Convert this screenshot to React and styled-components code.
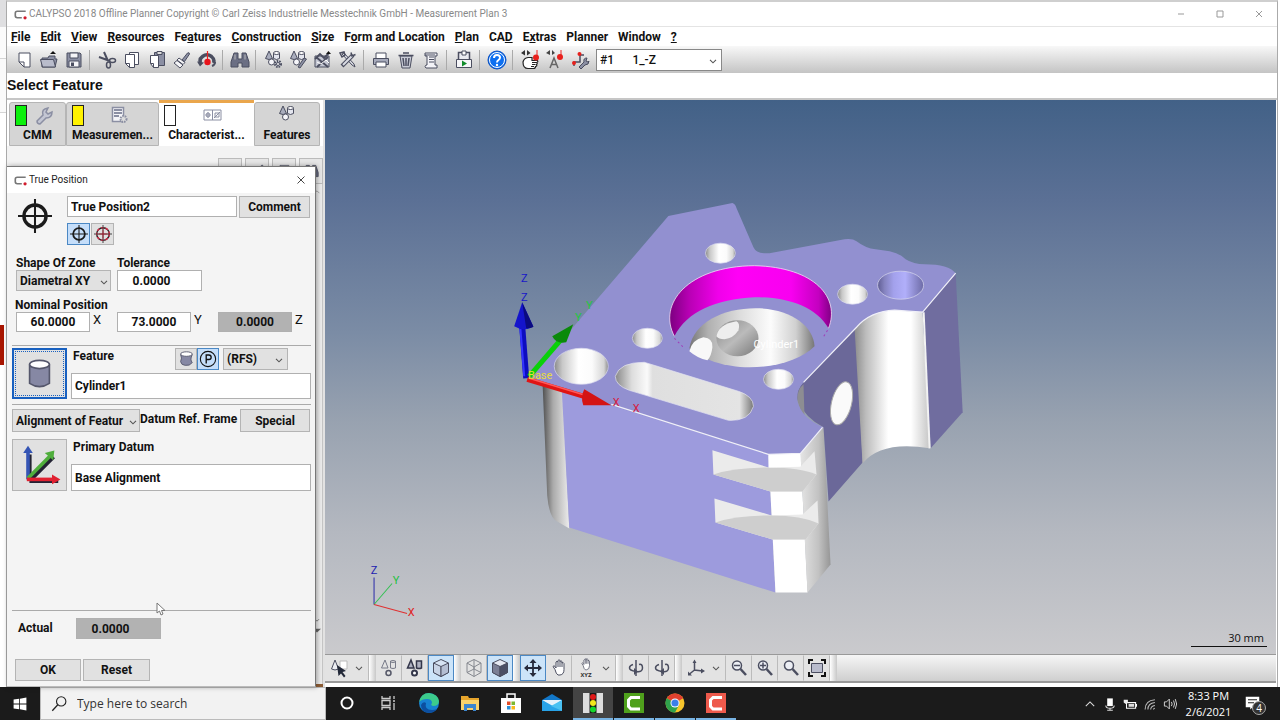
import React from "react";
import styled, { createGlobalStyle, css } from "styled-components";

const uiFont = `Roboto, "Liberation Sans", sans-serif`;
const winFont = `"Open Sans", "Noto Sans", sans-serif`;

const GlobalStyle = createGlobalStyle`
  * { box-sizing: border-box; }
  body { margin: 0; background: #fff; color: #111; font: 700 12px/16px ${uiFont}; }
  button, input, select { font: inherit; color: inherit; margin: 0; }
  svg { display: block; flex: none; }
`;

/* ---------- icon drawings ---------- */

const ink = "#4b4e60";
const soft = "#8b8fa3";

const Solids = () => (
  <>
    <path d="M6 1 L9.500 8.500 Q6 10.500 2.500 8.500Z" fill="#a9adbd" stroke={ink} />
    <path d="M10.500 3v5.500q3 2 6 0V3" fill="#e3e5ee" stroke={ink} />
    <ellipse cx="13.500" cy="3" rx="3" ry="1.500" fill="#fff" stroke={ink} />
    <circle cx="8.500" cy="12" r="3" fill="#f6f6fa" stroke={ink} />
  </>
);

const Cube = ({ faces }) => (
  <>
    <path d="M10 1.500 17.500 5v9.500L10 18.500 2.500 14.500V5Z" fill={faces[0]} stroke={ink} strokeLinejoin="round" />
    <path d="M2.500 5 10 8.500v10L2.500 14.500Z" fill={faces[1]} stroke={ink} strokeLinejoin="round" />
    <path d="M10 8.500 17.500 5v9.500L10 18.500Z" fill={faces[2]} stroke={ink} strokeLinejoin="round" />
  </>
);

const Hand = () => (
  <path
    d="M6 11.500 4 8.500q1-1.500 2 0l1 1.500V4q1-1.500 2 0V2.500q1-1.500 2 0V3.500q1-1.500 2 0V5q1.500-1 2 .500v6q0 5-4 5.500H9q-2-1-3-5.500ZM9 4v5M11 3v6M13 4v5"
    fill="#fff"
    stroke={ink}
  />
);

const Lens = () => (
  <>
    <circle cx="8" cy="7.500" r="4.500" fill="#eceef4" stroke={ink} strokeWidth="1.500" />
    <path d="m11.500 11 5.500 6" stroke={ink} strokeWidth="2.500" />
  </>
);

const glyphs = {
  page: <path d="M5 3h11v14H10l-5-5ZM5 12h5v5" fill="#fff" stroke={ink} />,
  open: (
    <>
      <path d="M3 8h6l1-2h6v3h2l-2 8H3Z" fill="#8d91a5" stroke={ink} />
      <path d="M1.500 9.500h13l2 7.500H3.500Z" fill="#b9bccb" stroke={ink} />
      <path d="m11 4 3-3 3 3Z" fill="#111" />
    </>
  ),
  save: (
    <>
      <path d="M3 3h13l1 1v13H3Z" fill={soft} stroke={ink} />
      <path d="M6 3h8v5H6ZM5 11h10v6H5Z" fill="#f5f5f8" stroke={ink} />
      <path d="M7 12.500h3V16H7Z" fill={ink} />
    </>
  ),
  cut: (
    <>
      <path d="M7 2 11 11M2 7l11 4" stroke={ink} strokeWidth="2" />
      <ellipse cx="15.500" cy="10.500" rx="3" ry="2" fill="none" stroke={ink} strokeWidth="1.500" />
      <ellipse cx="11.500" cy="15" rx="2" ry="3" fill="none" stroke={ink} strokeWidth="1.500" />
    </>
  ),
  copy: (
    <>
      <path d="M7.500 2.500h9v12h-9Z" fill="#fff" stroke={ink} />
      <path d="M3.500 4.500h9v13H7.500l-4-4ZM3.500 13.500h4v4" fill="#fff" stroke={ink} />
    </>
  ),
  paste: (
    <>
      <path d="M7.500 2.500h10v13h-10Z" fill={soft} stroke={ink} />
      <path d="M10 1.500h5v3h-5Z" fill="#ddd" stroke={ink} />
      <path d="M3.500 5.500h8v12H6.500l-3-4ZM3.500 13.500h3v4" fill="#fff" stroke={ink} />
    </>
  ),
  brush: (
    <>
      <path d="m10 10 5.500-7q2-1 2 1l-5 7.500Z" fill={soft} stroke={ink} />
      <path d="m7 8 6 4.500-2 2L5 10ZM5 10.500l6 4.500-3 3-6-5Z" fill="#f4f4f6" stroke={ink} />
    </>
  ),
  cmm: (
    <>
      <path d="M3.500 13Q2 9 5.500 6.500q4.500-3.500 9 0 3.500 3 2 6.500" fill="none" stroke={ink} strokeWidth="3.500" />
      <path d="m0 11.500 3 5 4-4Z" fill={ink} />
      <path d="M15 16q3-1 3-4" stroke={ink} strokeWidth="2" />
      <path d="M10.500 1v11" stroke="#e22" strokeWidth="1.200" />
      <circle cx="10.500" cy="12" r="3.200" fill="#e8141c" />
    </>
  ),
  find: (
    <>
      <path d="M4 3h4v6h4V3h4l3 9v5h-7v-4H8v4H1v-5Z" fill="#6b6f84" stroke={ink} />
      <path d="M5 4.500v5M15 4.500v5" stroke="#bbb" />
    </>
  ),
  solidGear: (
    <>
      <Solids />
      <circle cx="15" cy="14" r="3" fill="#d5d7e0" stroke={ink} strokeWidth="2" strokeDasharray="1.500 1" />
      <circle cx="15" cy="14" r="1.500" fill="#fff" stroke={ink} />
    </>
  ),
  solidPen: (
    <>
      <Solids />
      <path d="m10 17 6-9 2.500 1L12 18Z" fill={soft} stroke={ink} />
    </>
  ),
  evalTools: (
    <>
      <path d="M2 6h14v11H2Z" fill="#c4c7d3" stroke={ink} />
      <path d="m3 7 12 10M15 7 4 17M2 9l5-5 4 4 5-5" fill="none" stroke={ink} strokeWidth="1.800" />
      <path d="m4 12 4 2 5-4 3 3" fill="none" stroke="#fff" />
      <path d="m13 4 2.500-3L18 4Z" fill="#111" />
    </>
  ),
  tools: (
    <>
      <path d="m4 4 10 11 3 2-1-3L6 3Z" fill="#d9dbe3" stroke={ink} />
      <path d="M15 5 4 16" stroke={ink} strokeWidth="4" />
      <path d="M14.500 5.500 5 15" stroke="#d9dbe3" strokeWidth="2" />
      <path d="M17.500 4.500 14 6l-1-3.500M2 3l4-1 1 3-3 2Z" fill="none" stroke={ink} strokeWidth="1.500" />
    </>
  ),
  print: (
    <>
      <path d="M5 3h10v6H5Z" fill="#fff" stroke={ink} />
      <path d="M2.500 8.500h15v6h-15Z" fill="#a6aabb" stroke={ink} />
      <path d="M5 12h10v5H5Z" fill="#fff" stroke={ink} />
    </>
  ),
  trash: (
    <>
      <path d="M4 6h12l-2 12H6Z" fill="#c9cbd6" stroke={ink} />
      <path d="M2.500 5.500h15M7 3h6M7 8l1 8M10 8v8M13 8l-1 8" stroke={ink} strokeWidth="1.500" />
    </>
  ),
  scroll: (
    <>
      <path d="M4 3h12v3h-2v9h2v3H5q-2-1 0-3h1V6H4Z" fill="#f3f3f7" stroke={ink} />
      <path d="M8 7h5M8 9.500h5M8 12h5M4 5h10" stroke={ink} />
    </>
  ),
  clipPlay: (
    <>
      <path d="M4.500 2.500h11v9h-11Z" fill="#e9eaf0" stroke={ink} strokeWidth="1.500" />
      <path d="M8 1h4v4H8Z" fill="#fff" stroke={ink} />
      <path d="M2.500 9.500h15v8h-15Z" fill="#f6f6f9" stroke={ink} />
      <path d="m8 10.500 5 3-5 3Z" fill="#118c2b" />
    </>
  ),
  help: (
    <>
      <circle cx="10" cy="10" r="9" fill="#0d6ff0" stroke="#0a4fc0" />
      <circle cx="10" cy="10" r="7.500" fill="none" stroke="#fff" />
      <path d="M7 8q0-3 3-3t3 2.500q0 1.500-1.500 2.500T10 12.500" fill="none" stroke="#fff" strokeWidth="2" />
      <circle cx="10" cy="15" r="1.200" fill="#fff" />
    </>
  ),
  handProbe: (
    <>
      <path d="M3 12q1-4 5-4.500h4v3h5.500q1 1.500-1 2 1.500 1 0 2 1 1.500-1 2 0 2-2 2H8q-5 0-5-6.500Z" fill="#fff" stroke="#222" strokeWidth="1.200" />
      <path d="M12 12.500h4M12 14.500h3.500M11 16.500h3" stroke="#222" />
      <path d="M5 0 1 3l4 2.500ZM7 0v5.500L10.500 3Z" fill="#333" />
      <path d="M17 0v7" stroke="#e22" />
      <circle cx="16" cy="7.500" r="3" fill="#e8201c" />
    </>
  ),
  autoProbe: (
    <>
      <path d="m5 18 4-10 4 10M6.500 14.500h5" fill="none" stroke="#666" strokeWidth="1.500" />
      <path d="M5 0 1 3l4 2ZM7 0v5l3-2Z" fill="#444" />
      <path d="M16 0v7" stroke="#e22" />
      <circle cx="15" cy="7" r="3" fill="#e8201c" />
    </>
  ),
  probeWrench: (
    <>
      <path d="M10 5v7H4v4M10 5h4" fill="none" stroke={ink} strokeWidth="1.500" />
      <circle cx="9.500" cy="4" r="2" fill="#e8201c" />
      <circle cx="4" cy="13" r="2" fill="#e8201c" />
      <path d="m9 17 5-5q-1-4 3-4l-1 3 2 1 1-1q0 4-4 4l-4 4Z" fill={soft} stroke={ink} />
    </>
  ),
  wrench: <path d="m3 16 6-6q-2-6 5-7l-2 4 2 2 4-2q0 6-6 6l-6 6q-3 0-3-3Z" fill="#c3c6d3" stroke={soft} strokeWidth="1.500" />,
  plan: (
    <>
      <path d="M3.500 2.500h11v14h-11Z" fill="#f4f4f8" stroke={soft} strokeWidth="1.500" />
      <path d="M5 5h8M5 8h8M5 11h5" stroke={soft} strokeWidth="2" />
      <circle cx="14.500" cy="14" r="3" fill="#ddd" stroke={soft} strokeWidth="2" strokeDasharray="1.500 1" />
    </>
  ),
  charac: (
    <>
      <path d="M1 5h17v10H1ZM9.500 5v10" fill="#fff" stroke={soft} />
      <circle cx="5" cy="10" r="2" fill="none" stroke={soft} />
      <path d="M5 7v6M2.500 10h5M12 8h4v4h-4ZM11 13l6-6" fill="none" stroke={soft} />
    </>
  ),
  mark: <path d="M2 5h16v9H2Z" fill="#ecd85c" stroke="#c9c090" />,
  solids: <Solids />,
  solidsLine: (
    <>
      <path d="M6 2 9 10H2.500ZM11.500 3v7q2.500 1 5 0V3q-2.500-1-5 0v1q2.500 1 5 0" fill="none" stroke="#777a88" />
      <circle cx="9.500" cy="15" r="2.500" fill="none" stroke="#555868" strokeWidth="1.500" />
    </>
  ),
  solidsBold: (
    <>
      <path d="M6 2 9 10H2.500ZM11.500 3v7q2.500 1 5 0V3Z" fill="#aeb1c0" stroke="#33364a" strokeWidth="1.500" />
      <circle cx="9.500" cy="15" r="2.500" fill="#fff" stroke="#33364a" strokeWidth="2" />
    </>
  ),
  pick: (
    <>
      <path d="M6 2 9.500 11Q6 13 2.500 11Z" fill="#eceef3" stroke={ink} />
      <path d="M11 3h7v8h-7Z" fill="#fff" stroke="#bbb" />
      <path d="m8 7 9 6-3.500 1 3 4-1.500 1.500-3-4-2.500 2.500Z" fill="#222838" />
    </>
  ),
  cube: <Cube faces={["#d6e3f3", "#c8d4e6", "#b4bed2"]} />,
  cubeSolid: <Cube faces={["#e6e9f2", "#7b7f95", "#4c5066"]} />,
  cubeWire: (
    <path d="M10 1.500 17 5v9.500L10 18.500 3 14.500V5ZM3 5l7 4 7-4M10 9v9.500M10 1.500V11l7 3.500M10 11l-7 3.500" fill="none" stroke="#85888f" />
  ),
  move: (
    <>
      <path d="M10 3v14M3 10h14" stroke="#272b3c" strokeWidth="1.800" />
      <path d="m6.500 5 3.500-4 3.500 4ZM6.500 15l3.500 4 3.500-4ZM5 6.500 1 10l4 3.500ZM15 6.500l4 3.500-4 3.500Z" fill="#272b3c" />
    </>
  ),
  hand: <Hand />,
  handXyz: (
    <>
      <g transform="translate(3 -1) scale(.7 .75)"><Hand /></g>
      <text x="10" y="19" textAnchor="middle" fontSize="6" fill="#333">XYZ</text>
    </>
  ),
  rotL: (
    <>
      <path d="M10 2v16" stroke={ink} strokeWidth="1.500" />
      <path d="M7 6.500q-3.500 1-3.500 3.500T10 13.500t6.500-3.500T13 6.500" fill="none" stroke={ink} strokeWidth="1.500" />
      <path d="m8 10 4 3.500L8 17Z" fill={ink} />
    </>
  ),
  rotR: (
    <>
      <path d="M10 2v16" stroke={ink} strokeWidth="1.500" />
      <path d="M7 6.500q-3.500 1-3.500 3.500T10 13.500t6.500-3.500T13 6.500" fill="none" stroke={ink} strokeWidth="1.500" />
      <path d="m12 10-4 3.500 4 3.500Z" fill={ink} />
    </>
  ),
  axes: (
    <>
      <path d="M8.500 4v8l8 1M8.500 12l-5 4" fill="none" stroke={ink} strokeWidth="1.500" />
      <path d="M6.500 5h4l-2-3.500ZM15 10.500l4 2.500-4 2.500ZM2 13.500v4h4Z" fill={ink} />
    </>
  ),
  zoomOut: (<><Lens /><path d="M5 7.500h6" stroke={ink} strokeWidth="1.500" /></>),
  zoomIn: (<><Lens /><path d="M5 7.500h6M8 4.500v6" stroke={ink} strokeWidth="1.500" /></>),
  zoom: <Lens />,
  fit: (
    <>
      <path d="M4.500 5.500h11v9h-11Z" fill="#b9bccd" stroke={ink} />
      <path d="M2 6V2h4M14 2h4v4M18 14v4h-4M6 18H2v-4" fill="none" stroke="#111" strokeWidth="2" />
    </>
  ),
  target: (
    <>
      <circle cx="10" cy="10" r="6.500" fill="none" stroke="#1b1b1b" strokeWidth="2" />
      <path d="M10 0v20M0 10h20" stroke="#1b1b1b" strokeWidth="1.200" />
    </>
  ),
  targetRed: (
    <>
      <circle cx="10" cy="10" r="7" fill="none" stroke="#222" strokeWidth="1.500" />
      <circle cx="10" cy="10" r="7" fill="none" stroke="#e02848" strokeWidth="1.500" strokeDasharray="3 2" />
      <path d="M10 0v20M0 10h20" stroke="#333" />
      <path d="M10 5v10M5 10h10" stroke="#b01c30" />
    </>
  ),
  cylinder: (
    <>
      <path d="M4 4.500V16q6 4 12 0V4.500" fill="#8688a4" stroke="#55576c" />
      <ellipse cx="10" cy="4.500" rx="6" ry="2.500" fill="#fff" stroke="#55576c" />
    </>
  ),
  cylWarp: (
    <>
      <path d="M4 5q2 4 0 8 1 4 5 4 5 1 8-3-3-3 0-9" fill="#8688a4" stroke="#55576c" />
      <ellipse cx="10.500" cy="4.500" rx="6.500" ry="2.500" fill="#fff" stroke="#55576c" />
    </>
  ),
  circleP: (
    <>
      <circle cx="10" cy="10" r="8.500" fill="none" stroke="#111" strokeWidth="1.200" />
      <path d="M8 15V5.500h3q2.500 0 2.500 2.500T11 10.500H8" fill="none" stroke="#111" strokeWidth="1.500" />
    </>
  ),
  triad: (
    <>
      <path d="M5 16V5M5 16h12M5 16 15 6" stroke="#223" strokeWidth="1.800" transform="translate(.6 .6)" />
      <path d="M5 16V4" stroke="#3454b4" strokeWidth="1.500" />
      <path d="m3 5 2-3 2 3Z" fill="#3454b4" />
      <path d="m5 15.500 9-9" stroke="#4fae3c" strokeWidth="1.500" />
      <path d="m12 5 4-1-.500 4Z" fill="#4fae3c" />
      <path d="M4.500 16H16" stroke="#e02030" strokeWidth="1.500" />
      <path d="m15 14 3.500 2-3.500 2Z" fill="#e02030" />
    </>
  ),
  chevron: <path d="m5 8 5 5 5-5" fill="none" stroke="#555" strokeWidth="1.800" />,
  up: <path d="m4 13 6-6 6 6" fill="none" stroke="#ddd" strokeWidth="1.500" />,
  upDark: <path d="m4 13 6-6 6 6" fill="none" stroke="#999" strokeWidth="2" />,
  triangle: <path d="M0 7h20L10 16Z" fill="#666" />,
  close: <path d="m3 3 14 14M17 3 3 17" stroke="#333" strokeWidth="1.800" />,
  closeSoft: <path d="m4 4 12 12M16 4 4 16" stroke="#999" strokeWidth="2" />,
  maximize: <path d="M4 4h12v12H4Z" fill="none" stroke="#999" strokeWidth="2" />,
  minimize: <path d="M4 10h12" stroke="#999" strokeWidth="2" />,
  app: (
    <>
      <path d="M18 5H5q-3 0-3 3v4q0 3 3 3h7" fill="none" stroke="#777" strokeWidth="2.500" />
      <circle cx="17" cy="15" r="2.500" fill="#d21c2c" />
    </>
  ),
  windows: <path d="m2 4.500 7-1v6H2ZM10 3.300l8-1.300v7.500h-8ZM2 10.500h7v6l-7-1ZM10 10.500h8V18l-8-1.300Z" fill="#fff" />,
  search: (
    <>
      <circle cx="12" cy="7.500" r="5.500" fill="none" stroke="#222" strokeWidth="1.300" />
      <path d="m8 11.500-6.500 7" stroke="#222" strokeWidth="1.500" />
    </>
  ),
  cortana: <circle cx="10" cy="10" r="5.500" fill="none" stroke="#fff" strokeWidth="2" />,
  tasks: <path d="M4 3v2.500h8V3M4 17v-2.500h8V17M4 7.500h8v5H4ZM16 3v3M16 10v7M15 8h2" fill="none" stroke="#ccc" strokeWidth="1.300" />,
  edge: (
    <>
      <circle cx="10" cy="10" r="10" fill="#1681d2" />
      <path d="M0 9Q2 0 10 0q9 1 10 8 0 5-6 5-3-1-1-3 0-4-5-4Q3 6 0 9Z" fill="#3ccb8c" />
      <path d="M7 10q-2 7 6 7 3 0 5-1-3 4-8 4-8-1-8-8 2-4 5-2Z" fill="#0c4fa0" />
    </>
  ),
  folder: (
    <>
      <path d="M1 3h7l1 2h10v12H1Z" fill="#e7a52c" />
      <path d="M1 7h18v10H1Z" fill="#fbd46c" />
      <path d="M4 18v-7h12v7h-3v-3H7v3Z" fill="#3c87d0" />
    </>
  ),
  store: (
    <>
      <path d="M0 5h20v15H0Z" fill="#fff" />
      <path d="M6 5V1h8v4" fill="none" stroke="#fff" strokeWidth="1.500" />
      <path d="M6 8.500h3.500V12H6Z" fill="#e34c26" />
      <path d="M10.500 8.500H14V12h-3.500Z" fill="#7cb82f" />
      <path d="M6 13h3.500v3.500H6Z" fill="#2a90d8" />
      <path d="M10.500 13H14v3.500h-3.500Z" fill="#f8b81c" />
    </>
  ),
  mail: (
    <>
      <path d="M0 7 10 1l10 6v11H0Z" fill="#1277c8" />
      <path d="M0 7h20L10 14Z" fill="#e4f1fb" />
      <path d="m0 7 20 11H0Z" fill="#28a3e8" />
      <path d="M20 7v11L9 13Z" fill="#49c1f2" />
    </>
  ),
  traffic: (
    <>
      <path d="M0 0h20v20H0Z" fill="#ddd" />
      <path d="M6.500 0h7v20h-7Z" fill="#181818" />
      <circle cx="10" cy="4" r="3" fill="#e01818" />
      <circle cx="10" cy="10" r="3" fill="#f4e81c" />
      <circle cx="10" cy="16.500" r="3" fill="#16d82c" />
    </>
  ),
  camGreen: (
    <>
      <path d="M0 0h20v20H0Z" fill="#4fa01c" />
      <path d="M16 4.500H7L4.500 7v6.500L7 16h9" fill="none" stroke="#fff" strokeWidth="3" />
    </>
  ),
  camRed: (
    <>
      <path d="M0 0h20v20H0Z" fill="#ee5a4c" />
      <path d="M16 4.500H7L4.500 7v6.500L7 16h9" fill="none" stroke="#fff" strokeWidth="3" />
    </>
  ),
  chrome: (
    <>
      <circle cx="10" cy="10" r="9.500" fill="#f7c52c" />
      <path d="M10 10 1.800 5.200A9.500 9.500 0 0 1 18.200 5.200Z" fill="#e0402f" />
      <path d="M10 10 1.800 5.200A9.500 9.500 0 0 0 10 19.500l4-7.500Z" fill="#2fa24c" />
      <circle cx="10" cy="10" r="4.500" fill="#fff" />
      <circle cx="10" cy="10" r="3.600" fill="#3c7fe8" />
    </>
  ),
  mic: (
    <>
      <path d="M6 2h8v11H6Z" fill="#fff" />
      <path d="M4 12q0 4 6 4t6-4M10 16v3M6 19h8" fill="none" stroke="#ddd" strokeWidth="1.500" />
    </>
  ),
  battery: (
    <>
      <path d="M5 8h13v8H5ZM19.500 10v4" fill="none" stroke="#fff" strokeWidth="1.500" />
      <path d="M8 10h8v4H8Z" fill="#ddd" />
      <path d="M1 4h6v4l-3 2-3-2Z" fill="#eee" />
    </>
  ),
  wifi: <path d="M3 18Q3 5 17 4M7 18q0-9 10-10M11 18q0-5 6-6M15 18q0-2 2-2" fill="none" stroke="#bbb" strokeWidth="1.500" />,
  sound: <path d="M2 7h3l4-4v14l-4-4H2ZM12 7q2 3 0 6M15 5q3 5 0 10M17.500 3q4 7 0 14" fill="none" stroke="#ddd" strokeWidth="1.300" />,
  note: (
    <>
      <path d="M1 1h18v14H10l-3 3v-3H1Z" fill="#fff" />
      <path d="M4 5h12M4 9h8" stroke="#222" strokeWidth="1.500" />
    </>
  ),
};

const Icon = ({ name, size = 20 }) => (
  <svg width={size} height={size} viewBox="0 0 20 20" fill="none" aria-hidden="true">
    {glyphs[name]}
  </svg>
);

/* ---------- application window ---------- */

const Desktop = styled.div`
  min-height: 100vh;
  display: flex;
  flex-direction: column;
  background: #fff;
`;

const Workspace = styled.div`
  flex: 1;
  display: flex;
`;

const Gutter = styled.div`
  width: 6px;
  flex: none;
  padding-top: 325px;
  background: linear-gradient(#dfdfe1 27px, #fbfbfb 27px 58px, #d5d5d5 58px 59px, #fafafa 59px 112px, #d5d5d5 112px 113px, #fff 113px);
`;

const RedMark = styled.div`
  width: 4px;
  height: 40px;
  background: #a81500;
`;

const AppWindow = styled.main`
  flex: 1;
  min-width: 0;
  display: flex;
  flex-direction: column;
  background: #fff;
  border: 1px solid #aaa;
  border-top: 2px solid #cfcfcf;
  border-bottom: 0;
  margin-right: 2px;
`;

const TitleBar = styled.header`
  height: 25px;
  flex: none;
  display: flex;
  align-items: center;
  gap: 2px;
  padding-left: 7px;
  border-bottom: 1px solid #e4e4e4;
  color: #888;
  font: 400 10px/16px ${uiFont};
`;

const Title = styled.h1`
  flex: 1;
  margin: 0;
  font: inherit;
  white-space: nowrap;
`;

const CaptionButton = styled.button`
  width: 37px;
  height: 24px;
  padding: 0;
  border: 0;
  background: none;
  display: flex;
  align-items: center;
  justify-content: center;
`;

const MenuBar = styled.nav`
  height: 19px;
  flex: none;
  display: flex;
  gap: 10px;
  padding-left: 4px;
`;

const MenuItem = styled.button`
  padding: 0;
  border: 0;
  background: none;
  white-space: nowrap;
`;

const ToolBar = styled.div`
  height: 27px;
  flex: none;
  display: flex;
  align-items: center;
  padding-left: 4px;
  background: linear-gradient(#f8f8f8, #c4c4c4);
`;

const ToolButton = styled.button`
  width: 25px;
  height: 26px;
  padding: 0;
  border: 0;
  background: none;
  display: flex;
  align-items: center;
  justify-content: center;
`;

const Separator = styled.span`
  width: 1px;
  height: 20px;
  margin: 0 4px 0 3px;
  background: #aaa;
`;

const SelectWrap = styled.div`
  position: relative;
  flex: none;
  width: ${(p) => p.$width}px;
  height: ${(p) => p.$height}px;
  margin-left: ${(p) => p.$lead || 0}px;

  svg {
    position: absolute;
    right: ${(p) => (p.$tight ? 1 : 3)}px;
    top: calc(50% - 5px);
    pointer-events: none;
  }
`;

const NativeSelect = styled.select`
  appearance: none;
  width: 100%;
  height: 100%;
  padding: 0 0 0 3px;
  border: 1px solid ${(p) => (p.$light ? "#888" : "#b4b4b4")};
  border-radius: 0;
  background: ${(p) => (p.$light ? "#fff" : "#e1e1e1")};
  font-weight: ${(p) => (p.$light ? 500 : 700)};
  white-space: pre;
`;

const Picker = ({ label, value, light, ...size }) => (
  <SelectWrap {...size}>
    <NativeSelect aria-label={label} $light={light} defaultValue={value}>
      <option>{value}</option>
    </NativeSelect>
    <Icon name="chevron" size={12} />
  </SelectWrap>
);

const Prompt = styled.h2`
  height: 27px;
  flex: none;
  margin: 0;
  padding-top: 3px;
  border-bottom: 2px solid #c6c6c6;
  font: 700 14px/18px "Liberation Sans", Arial, sans-serif;
`;

const Content = styled.div`
  position: relative;
  flex: 1;
  display: flex;
`;

/* ---------- left panel ---------- */

const SidePanel = styled.aside`
  width: 318px;
  flex: none;
  display: flex;
  flex-direction: column;
  border-right: 2px solid #e2e2e2;
  background: #f3f3f3;
`;

const Tabs = styled.div`
  display: flex;
  align-items: flex-end;
  height: 46px;
  padding-left: 2px;
  background: #fff;
`;

const Tab = styled.button`
  width: ${(p) => p.$width}px;
  height: 44px;
  flex: none;
  padding: 0 4px;
  display: flex;
  flex-direction: column;
  border: 1px solid #b5b5b5;
  border-radius: 3px 3px 0 0;
  background: #d5d5d5;
  text-align: center;
  white-space: nowrap;

  ${(p) =>
    p.$active &&
    css`
      height: 46px;
      background: #fff;
      border-width: 3px 0 0;
      border-color: #eaa64c;
      border-radius: 0;
    `}
`;

const TabTop = styled.span`
  height: 24px;
  width: 100%;
  display: flex;
  align-items: center;
`;

const TabLabel = styled.span`
  width: 100%;
  line-height: 16px;
`;

const Lamp = styled.i`
  width: 12px;
  height: 21px;
  flex: none;
  margin-left: 1px;
  border: 1px solid #222;
  background: ${(p) => p.$color};
`;

const TabIcon = styled.span`
  flex: 1;
  display: flex;
  justify-content: center;
`;

const MiniTools = styled.div`
  display: flex;
  gap: 3px;
  justify-content: flex-end;
  padding-top: 12px;
`;

const MiniButton = styled.button`
  width: 24px;
  height: 26px;
  padding: 0 3px;
  border: 1px solid #bbb;
  background: #e6e6e6;
`;

const ScrollTrack = styled.div`
  flex: 1;
  align-self: flex-end;
  width: 10px;
  padding: 4px 1px 50px 0;
  border-right: 1px solid #c5c5c5;
  background: #ececec;
  display: flex;
  flex-direction: column;
  gap: 2px;
`;

const PanelFoot = styled.div`
  height: 3px;
  background: linear-gradient(90deg, #b98a4c, #8c5c34);
`;

const Fill = styled.div`
  flex: 1;
`;

/* ---------- true position dialog ---------- */

const Dialog = styled.section`
  position: absolute;
  left: 0;
  top: 66px;
  bottom: 0;
  width: 309px;
  display: flex;
  flex-direction: column;
  border: 1px solid #777;
  border-left: 0;
  border-bottom-color: #bbb;
  background: #f4f4f4;
  box-shadow: 1px 0 5px rgba(0, 0, 0, 0.35);
`;

const DialogTitle = styled(TitleBar)`
  height: 26px;
  border: 0;
  background: #fff;
  color: #222;
`;

const DialogClose = styled(CaptionButton)`
  width: 28px;
`;

const Form = styled.form`
  flex: 1;
  display: flex;
  flex-direction: column;
  padding: 3px 4px 5px 5px;
`;

const Row = styled.div`
  display: flex;
  flex: none;
  gap: ${(p) => p.$gap || 0}px;
  height: ${(p) => (p.$height ? p.$height + "px" : "auto")};
  padding-left: ${(p) => p.$indent || 0}px;
  align-items: ${(p) => p.$align || "flex-start"};
`;

const Stack = styled.div`
  display: flex;
  flex-direction: column;
  flex: ${(p) => (p.$grow ? 1 : "none")};
  gap: ${(p) => p.$gap || 0}px;
  width: ${(p) => (p.$width ? p.$width + "px" : "auto")};
`;

const Emblem = styled.div`
  width: 55px;
  padding: 3px 0 0 6px;
`;

const TextBox = styled.input`
  width: ${(p) => (p.$width ? p.$width + "px" : "100%")};
  height: ${(p) => p.$height || 21}px;
  padding: 0 3px;
  border: 1px solid #b0b0b0;
  background: ${(p) => (p.readOnly ? "#b2b2b2" : "#fff")};
  text-align: ${(p) => (p.$number ? "center" : "left")};
  ${(p) => p.$shift && `padding-left: 0; padding-right: 16px;`}
`;

const PushButton = styled.button`
  width: ${(p) => p.$width}px;
  height: ${(p) => p.$height || 22}px;
  flex: none;
  padding: 0;
  display: flex;
  align-items: center;
  justify-content: center;
  border: 1px solid ${(p) => (p.$on ? "#4b88c4" : "#b4b4b4")};
  background: ${(p) => (p.$on ? "#c5defa" : "#e1e1e1")};
`;

const FocusButton = styled(PushButton)`
  border: 2px solid #1860c0;
  outline: 1px dotted #1860c0;
  outline-offset: -4px;
`;

const Label = styled.label`
  display: block;
  white-space: nowrap;
  width: ${(p) => (p.$width ? p.$width + "px" : "auto")};
  padding-left: ${(p) => p.$inset || 0}px;
  line-height: ${(p) => p.$line || 16}px;
`;

const Axis = styled(Label)`
  padding-left: 3px;
  font-weight: 400;
  font-size: 13px;
`;

const Rule = styled.hr`
  width: 100%;
  flex: none;
  margin: ${(p) => p.$before}px 0 ${(p) => p.$after}px;
  border: 0;
  border-top: 1px solid #aaa;
`;

const Cursor = styled.svg`
  position: absolute;
  left: 149px;
  top: 502px;
`;

/* ---------- 3d view ---------- */

const Viewer = styled.section`
  flex: 1;
  min-width: 0;
  display: flex;
  flex-direction: column;
  margin: 0 1px 4px 0;
`;

const Stage = styled.div`
  position: relative;
  flex: 1;
  overflow: hidden;
  background: linear-gradient(#426187, #5b7095 18%, #7b8ca5 42%, #98a2b0 58%, #b4b8c0 78%, #cacacd);
`;

const SceneSvg = styled.svg`
  position: absolute;
  inset: 0;
  width: 100%;
  height: 100%;
  font-family: ${uiFont};
  font-weight: 400;
`;

const ScaleBar = styled.div`
  position: absolute;
  right: 9px;
  bottom: 7px;
  width: 76px;
  padding-right: 3px;
  border-bottom: 1px solid #111;
  text-align: right;
  font: 400 11px/16px ${winFont};
`;

const ViewBar = styled.div`
  height: 29px;
  flex: none;
  display: flex;
  border-top: 1px solid #999;
  border-bottom: 2px solid #999;
  background: linear-gradient(#f6f6f6, #cfcfcf);
`;

const ViewButton = styled.button`
  width: ${(p) => (p.$menu ? 44 : 26)}px;
  flex: none;
  padding: 0;
  display: flex;
  align-items: center;
  justify-content: space-evenly;
  border: 1px solid ${(p) => (p.$on ? "#4b88c4" : "transparent")};
  border-right-color: ${(p) => (p.$on ? "#4b88c4" : "#bbb")};
  background: ${(p) => (p.$on ? "#cce4f9" : "#e3e3e3")};
`;

const Grip = styled.span`
  width: 7px;
  background: linear-gradient(90deg, #fff, #c8c8c8);
`;

const Hole = ({ cx, cy, rx = 15, ry = 10, fill = "url(#bore)" }) => (
  <ellipse cx={cx} cy={cy} rx={rx} ry={ry} fill={fill} stroke="#d9d9ee" strokeWidth=".700" />
);

const Scene = () => (
  <SceneSvg viewBox="326 100 950 554" preserveAspectRatio="xMinYMin slice" role="img" aria-label="Part model with cylinder 1 selected">
    <defs>
      <linearGradient id="bore"><stop stopColor="#8a8a8a" /><stop offset=".15" stopColor="#c8c8c8" /><stop offset=".45" stopColor="#fff" /><stop offset=".7" stopColor="#fbfbfb" /><stop offset=".92" stopColor="#d5d5d5" /><stop offset="1" stopColor="#8a8a8a" /></linearGradient>
      <linearGradient id="blueBore"><stop stopColor="#5e5c92" /><stop offset=".15" stopColor="#8583bf" /><stop offset=".35" stopColor="#a3a1ec" /><stop offset=".6" stopColor="#b1affa" /><stop offset="1" stopColor="#6d6ba6" /></linearGradient>
      <linearGradient id="magenta"><stop stopColor="#7c0080" /><stop offset=".12" stopColor="#b800b4" /><stop offset=".3" stopColor="#f000ea" /><stop offset=".42" stopColor="#ff00f6" /><stop offset=".75" stopColor="#f800f0" /><stop offset=".92" stopColor="#c400c0" /><stop offset="1" stopColor="#800084" /></linearGradient>
      <linearGradient id="fillet"><stop stopColor="#4d4d4d" /><stop offset=".4" stopColor="#aaa" /><stop offset="1" stopColor="#ececec" /></linearGradient>
      <linearGradient id="notch"><stop stopColor="#8c8c8c" /><stop offset=".15" stopColor="#bcbcbc" /><stop offset=".45" stopColor="#fff" /><stop offset=".75" stopColor="#fff" /><stop offset="1" stopColor="#c6c6c6" /></linearGradient>
      <linearGradient id="pocket"><stop stopColor="#888" /><stop offset=".12" stopColor="#ddd" /><stop offset=".23" stopColor="#fafafa" /><stop offset=".27" stopColor="#dfdfdf" /><stop offset=".9" stopColor="#e4e4e4" /><stop offset="1" stopColor="#777" /></linearGradient>
      <linearGradient id="bowl"><stop stopColor="#777" /><stop offset=".15" stopColor="#b0b0b0" /><stop offset=".4" stopColor="#dcdcdc" /><stop offset=".65" stopColor="#fcfcfc" /><stop offset=".85" stopColor="#d0d0d0" /><stop offset="1" stopColor="#777" /></linearGradient>
      <linearGradient id="side"><stop stopColor="#e4e4e4" /><stop offset=".6" stopColor="#c2c2c2" /><stop offset="1" stopColor="#969696" /></linearGradient>
      <linearGradient id="cross" x2="1" y2="1"><stop stopColor="#888" /><stop offset=".5" stopColor="#bbb" /><stop offset="1" stopColor="#777" /></linearGradient>
    </defs>

    <path d="M543 375 548 495Q550 518 558 521L570 528 563 380Z" fill="url(#fillet)" />
    <path d="M562 380 570 527 776 592 769 454Z" fill="#9d9bdd" />
    <path d="M769 454 801 453 808 592 776 592Z" fill="#fff" />
    <path d="M801 453 824 426 831 564 808 592Z" fill="url(#side)" />
    <path d="M798 400Q796 390 804 382L857 326 863 462 829 501 824 427Q806 418 798 400Z" fill="#6b6899" />
    <path d="M798 400Q797 390 804 384L805 416Q800 410 798 400Z" fill="#8d8d92" />
    <path d="M855 328Q868 310 892 309L923 311 930 448Q882 440 863 463Z" fill="url(#notch)" />
    <path d="M923 311 956 273 963 412 931 448Z" fill="#706d9f" />
    <path d="m924 312 6 136" stroke="#f2f2f2" strokeWidth="2" />

    <path
      d="M669 216 733 203Q736 204 737 208L754 247Q757 254 770 253L845 239Q853 238 857 241 866 248 876 249L890 251Q900 253 906 259 914 264 925 264 949 264 956 273L923 312 895 310Q870 311 857 327L804 382Q796 391 798 401 802 418 824 427L801 453 769 454 543 384Q528 378 543 363Z"
      fill="#9290d0"
    />
    <path d="m612 404 157 50 32-1 22-26M804 382l53-55q14-16 38-17l28 2 33-39" fill="none" stroke="#f0f0f8" strokeWidth="1.200" />

    <path d="M713 450 769 467 801 466 815 451 817 474 803 491 771 491 714 474Z" fill="#ebebeb" />
    <path d="M714 474Q735 467 770 467 800 467 817 474L803 491 771 491Z" fill="#cecece" />
    <path d="m769 455 32-1v12l-32 1Z" fill="#fff" />
    <path d="M715 498 772 515 803 514 818 500 819 523 806 539 773 539 716 522Z" fill="#ebebeb" />
    <path d="M716 522Q737 515 772 515 802 515 819 523L806 539 773 539Z" fill="#cecece" />

    <Hole cx="721" cy="253" />
    <Hole cx="853" cy="294" />
    <Hole cx="648" cy="338" />
    <Hole cx="779" cy="379" />
    <Hole cx="582" cy="366" rx={27} ry={18} />
    <Hole cx="901" cy="285" rx={23} ry={14} fill="url(#blueBore)" />
    <ellipse cx="842" cy="403" rx="10" ry="22" fill="#fafafa" stroke="#aaa" transform="rotate(14 842 403)" />
    <path d="M645 362 739 391Q754 396 754 406 750 421 729 420L630 390Q616 385 616 376 620 362 645 362Z" fill="url(#pocket)" stroke="#e2e2f0" strokeWidth=".700" />

    <path d="M675 336C658 304 688 266 755 265.500 816 267 841 298 829 328 816 306 788 297 755 297 716 299 688 311 675 336Z" fill="url(#magenta)" />
    <path d="M675 336C658 304 688 266 755 265.500 816 267 841 298 829 328" fill="none" stroke="#f0dcf4" strokeWidth=".800" />
    <path d="M690 348C694 322 724 308 756 308 790 308 814 325 815 346 802 359 778 367 750 367 725 367 702 359 690 348Z" fill="url(#bowl)" />
    <ellipse cx="738" cy="338" rx="21" ry="18" fill="url(#cross)" />
    <path d="M717 336q2-12 20-15 4 2 2 9-5 8-14 9-6 0-8-3Z" fill="#eee" />
    <path d="M690 351q3-12 14-14 10 1 9 10-1 9-5 13-10-2-18-9Z" fill="#f8f8f8" />
    <path d="m675 338 10 10M828 330l-5 8" stroke="#a13bb8" strokeDasharray="2 3" />
    <text x="754" y="348" fontSize="11" fill="#fff">Cylinder1</text>

    <g>
      <path d="m527 378-4-52" stroke="#0d0dc0" strokeWidth="6" />
      <path d="m525 376-4-50" stroke="#3333ff" strokeWidth="2" />
      <path d="m523 302 11 24q-9 6-19 0Z" fill="#1414cc" />
      <path d="m523 302 4 26q7 0 7-2Z" fill="#0a0a80" />
      <path d="m530 376 32-37" stroke="#0ad00a" strokeWidth="5" />
      <path d="m574 324-21 12q4 8 14 6Z" fill="#0a8a0a" />
      <path d="m528 379 60 18" stroke="#e01414" strokeWidth="5" />
      <path d="m530 378 56 17" stroke="#ff5a5a" strokeWidth="1.500" />
      <path d="m612 405-27-16q-4 8-1 16Z" fill="#d41414" />
    </g>
    <g fontSize="11" textAnchor="middle">
      <text x="525" y="282" fill="#1818c8">Z</text>
      <text x="525" y="301" fill="#1818c8">Z</text>
      <text x="590" y="309" fill="#1fc83c">Y</text>
      <text x="579" y="321" fill="#1fc83c">Y</text>
      <text x="617" y="406" fill="#d81c40">X</text>
      <text x="637" y="412" fill="#d81c40">X</text>
      <text x="541" y="379" fill="#e6dc3c">Base</text>
      <text x="375" y="574" fill="#2020b0">Z</text>
      <text x="397" y="583" fill="#20c040">Y</text>
      <text x="412" y="615" fill="#e02020">X</text>
    </g>
    <path d="M375 604v-27" stroke="#2828a8" />
    <path d="m375 604 18-21" stroke="#30c050" />
    <path d="m375 604 33 9" stroke="#e03030" />
  </SceneSvg>
);

/* ---------- taskbar ---------- */

const TaskBar = styled.footer`
  height: 33px;
  flex: none;
  display: flex;
  background: #1b1b1b;
  color: #fff;
  font: 400 11px/16px ${winFont};
`;

const StartButton = styled.button`
  width: 40px;
  padding: 0;
  border: 0;
  background: none;
  display: flex;
  align-items: center;
  justify-content: center;
`;

const SearchBox = styled.label`
  width: 286px;
  flex: none;
  display: flex;
  align-items: center;
  gap: 9px;
  padding-left: 10px;
  border: 1px solid #bbb;
  background: #f2f2f2;
`;

const SearchInput = styled.input`
  flex: 1;
  min-width: 0;
  padding: 0;
  border: 0;
  background: none;
  font-size: 12px;
  &::placeholder { color: #333; opacity: 1; }
`;

const Task = styled.button`
  width: 40px;
  margin-left: 1px;
  padding: 0;
  border: 0;
  border-bottom: 2px solid ${(p) => (p.$running ? "#78b4e4" : "transparent")};
  background: ${(p) => (p.$active ? "#444" : "none")};
  display: flex;
  align-items: center;
  justify-content: center;
`;

const Tray = styled.div`
  display: flex;
  align-items: center;
  margin-left: auto;
  padding-right: 3px;
`;

const TrayButton = styled.button`
  width: 20px;
  padding: 0;
  border: 0;
  background: none;
  display: flex;
  justify-content: center;
`;

const Clock = styled.time`
  width: 57px;
  text-align: center;
`;

const NoteButton = styled(TrayButton)`
  position: relative;
  width: 30px;
  margin-right: 10px;
`;

const Badge = styled.span`
  position: absolute;
  right: 1px;
  top: 5px;
  width: 14px;
  height: 14px;
  border: 1px solid #aaa;
  border-radius: 50%;
  background: #333;
  color: #fff;
  font-size: 10px;
  line-height: 12px;
`;

const menus = [
  ["", "F", "ile"], ["", "E", "dit"], ["", "V", "iew"], ["", "R", "esources"], ["Fe", "a", "tures"],
  ["", "C", "onstruction"], ["", "S", "ize"], ["F", "o", "rm and Location"], ["", "P", "lan"], ["CA", "D", ""],
  ["E", "x", "tras"], ["Planner", "", ""], ["Window", "", ""], ["", "?", ""],
];

const toolGroups = [
  ["page", "open", "save"],
  ["cut", "copy", "paste", "brush", "cmm"],
  ["find"],
  ["solidGear", "solidPen", "evalTools", "tools"],
  ["print", "trash", "scroll"],
  ["clipPlay"],
  ["help"],
  ["handProbe", "autoProbe", "probeWrench"],
];

const viewGroups = [
  [["pick", "menu"]],
  [["solidsLine"], ["solidsBold"], ["cube", "on"]],
  [["cubeWire"], ["cubeSolid", "on"]],
  [["move", "on"], ["hand"], ["handXyz", "menu"]],
  [["rotL"], ["rotR"]],
  [["axes", "menu"], ["zoomOut"], ["zoomIn"], ["zoom"], ["fit"]],
];

const tabs = [
  { label: "CMM", width: 57, color: "#0cf00c", icon: "wrench" },
  { label: "Measuremen...", width: 93, color: "#fff200", icon: "plan" },
  { label: "Characterist...", width: 95, color: "#fff", icon: "charac", active: true },
  { label: "Features", width: 66, icon: "solids" },
];

const tasks = [
  ["cortana"], ["tasks"], ["edge"], ["folder"], ["store"], ["mail"],
  ["traffic", "active"], ["camGreen", "run"], ["chrome", "run"], ["camRed", "run"],
];

const TruePosition = () => (
  <Dialog aria-label="True Position">
    <DialogTitle>
      <Icon name="app" size={13} />
      <Title as="h2">True Position</Title>
      <DialogClose aria-label="Close dialog"><Icon name="close" size={10} /></DialogClose>
    </DialogTitle>
    <Form onSubmit={(e) => e.preventDefault()}>
      <Row $height={60}>
        <Emblem><Icon name="target" size={34} /></Emblem>
        <Stack $gap={5}>
          <Row $gap={2}>
            <TextBox aria-label="Name" defaultValue="True Position2" $width={170} />
            <PushButton type="button" $width={71}>Comment</PushButton>
          </Row>
          <Row $gap={1}>
            <PushButton type="button" $width={23} $on aria-label="Position"><Icon name="target" size={18} /></PushButton>
            <PushButton type="button" $width={23} aria-label="Position of pattern"><Icon name="targetRed" size={18} /></PushButton>
          </Row>
        </Stack>
      </Row>
      <Row $indent={4} $gap={6} $height={41}>
        <Stack $width={95}>
          <Label $line={14}>Shape Of Zone</Label>
          <Picker label="Shape Of Zone" value="Diametral XY" $width={95} $height={21} $tight />
        </Stack>
        <Stack>
          <Label htmlFor="tolerance" $line={14}>Tolerance</Label>
          <TextBox id="tolerance" defaultValue="0.0000" $number $shift $width={85} />
        </Stack>
      </Row>
      <Row $indent={3} $height={15} $align="center"><Label>Nominal Position</Label></Row>
      <Row $indent={4} $height={21}>
        <TextBox id="nx" defaultValue="60.0000" $number $width={74} $height={20} />
        <Axis htmlFor="nx" $width={27}>X</Axis>
        <TextBox id="ny" defaultValue="73.0000" $number $width={74} $height={20} />
        <Axis htmlFor="ny" $width={27}>Y</Axis>
        <TextBox id="nz" readOnly defaultValue="0.0000" $number $width={74} $height={20} />
        <Axis htmlFor="nz" $width={14}>Z</Axis>
      </Row>
      <Rule $before={12} $after={2} />
      <Row $gap={4}>
        <FocusButton type="button" $width={55} $height={51} aria-label="Select feature"><Icon name="cylinder" size={33} /></FocusButton>
        <Stack $grow $gap={3}>
          <Row $height={22}>
            <Label htmlFor="feature" $width={104} $inset={2}>Feature</Label>
            <PushButton type="button" $width={22} aria-label="Form"><Icon name="cylWarp" size={18} /></PushButton>
            <PushButton type="button" $width={22} $on aria-label="Projected"><Icon name="circleP" size={18} /></PushButton>
            <Picker label="Material condition" value="(RFS)" $width={65} $height={22} $lead={4} />
          </Row>
          <TextBox id="feature" defaultValue="Cylinder1" $height={26} />
        </Stack>
      </Row>
      <Rule $before={5} $after={4} />
      <Row $height={30}>
        <Picker label="Alignment" value="Alignment of Featur" $width={128} $height={23} $tight />
        <Label $line={20} $width={100}>Datum Ref. Frame</Label>
        <PushButton type="button" $width={70} $height={23}>Special</PushButton>
      </Row>
      <Row $gap={4}>
        <PushButton type="button" $width={55} $height={52} aria-label="Select datum"><Icon name="triad" size={48} /></PushButton>
        <Stack $grow $gap={9}>
          <Label htmlFor="datum" $inset={2}>Primary Datum</Label>
          <TextBox id="datum" defaultValue="Base Alignment" $height={27} />
        </Stack>
      </Row>
      <Fill />
      <Rule $before={0} $after={7} />
      <Row $indent={6} $height={41}>
        <Label htmlFor="actual" $width={58} $line={20}>Actual</Label>
        <TextBox id="actual" readOnly defaultValue="0.0000" $number $shift $width={85} />
      </Row>
      <Row $indent={3} $gap={2}>
        <PushButton $width={66}>OK</PushButton>
        <PushButton type="reset" $width={67}>Reset</PushButton>
      </Row>
    </Form>
  </Dialog>
);

export default function App() {
  return (
    <Desktop>
      <GlobalStyle />
      <Workspace>
        <Gutter><RedMark /></Gutter>
        <AppWindow>
          <TitleBar>
            <Icon name="app" size={13} />
            <Title>CALYPSO 2018 Offline Planner Copyright © Carl Zeiss Industrielle Messtechnik GmbH - Measurement Plan 3</Title>
            <CaptionButton aria-label="Minimize"><Icon name="minimize" size={10} /></CaptionButton>
            <CaptionButton aria-label="Maximize"><Icon name="maximize" size={10} /></CaptionButton>
            <CaptionButton aria-label="Close"><Icon name="closeSoft" size={10} /></CaptionButton>
          </TitleBar>
          <MenuBar>
            {menus.map(([a, u, b]) => (
              <MenuItem key={a + u + b}>{a}{u && <u>{u}</u>}{b}</MenuItem>
            ))}
          </MenuBar>
          <ToolBar>
            {toolGroups.map((group, i) => (
              <React.Fragment key={i}>
                {i > 0 && <Separator />}
                {group.map((name) => (
                  <ToolButton key={name} aria-label={name}><Icon name={name} /></ToolButton>
                ))}
              </React.Fragment>
            ))}
            <Picker label="Probe" value={"#1\u2003\u20021_-Z"} light $width={126} $height={22} $lead={4} />
          </ToolBar>
          <Prompt>Select Feature</Prompt>
          <Content>
            <SidePanel>
              <Tabs>
                {tabs.map((t) => (
                  <Tab key={t.label} $width={t.width} $active={t.active}>
                    <TabTop>
                      {t.color && <Lamp $color={t.color} />}
                      <TabIcon><Icon name={t.icon} /></TabIcon>
                    </TabTop>
                    <TabLabel>{t.label}</TabLabel>
                  </Tab>
                ))}
              </Tabs>
              <MiniTools>
                {["mark", "brush", "page", "find"].map((n) => (
                  <MiniButton key={n} aria-label={n}><Icon name={n} size={16} /></MiniButton>
                ))}
              </MiniTools>
              <ScrollTrack>
                <Icon name="upDark" size={8} />
                <Fill />
                <Icon name="chevron" size={8} />
                <Icon name="triangle" size={8} />
              </ScrollTrack>
              <PanelFoot />
            </SidePanel>
            <Viewer>
              <Stage>
                <Scene />
                <ScaleBar>30 mm</ScaleBar>
              </Stage>
              <ViewBar>
                {viewGroups.map((group, i) => (
                  <React.Fragment key={i}>
                    {i > 0 && <Grip />}
                    {group.map(([name, mode]) => (
                      <ViewButton key={name} aria-label={name} $menu={mode === "menu"} $on={mode === "on"}>
                        <Icon name={name} />
                        {mode === "menu" && <Icon name="chevron" size={12} />}
                      </ViewButton>
                    ))}
                  </React.Fragment>
                ))}
                <Grip />
              </ViewBar>
            </Viewer>
            <TruePosition />
            <Cursor width="10" height="14" viewBox="0 0 10 14">
              <path d="M1 1v10l2.500-2 1.500 4 2-1-1.500-3.500H9Z" fill="#fff" stroke="#777" />
            </Cursor>
          </Content>
        </AppWindow>
      </Workspace>
      <TaskBar>
        <StartButton aria-label="Start"><Icon name="windows" size={16} /></StartButton>
        <SearchBox>
          <Icon name="search" size={17} />
          <SearchInput placeholder="Type here to search" aria-label="Search" />
        </SearchBox>
        {tasks.map(([name, state]) => (
          <Task key={name} aria-label={name} $running={!!state} $active={state === "active"}>
            <Icon name={name} />
          </Task>
        ))}
        <Tray>
          {["up", "mic", "battery", "wifi", "sound"].map((n) => (
            <TrayButton key={n} aria-label={n}><Icon name={n} size={14} /></TrayButton>
          ))}
          <Clock>8:33 PM<br />2/6/2021</Clock>
          <NoteButton aria-label="Notifications"><Icon name="note" size={15} /><Badge>4</Badge></NoteButton>
        </Tray>
      </TaskBar>
    </Desktop>
  );
}
